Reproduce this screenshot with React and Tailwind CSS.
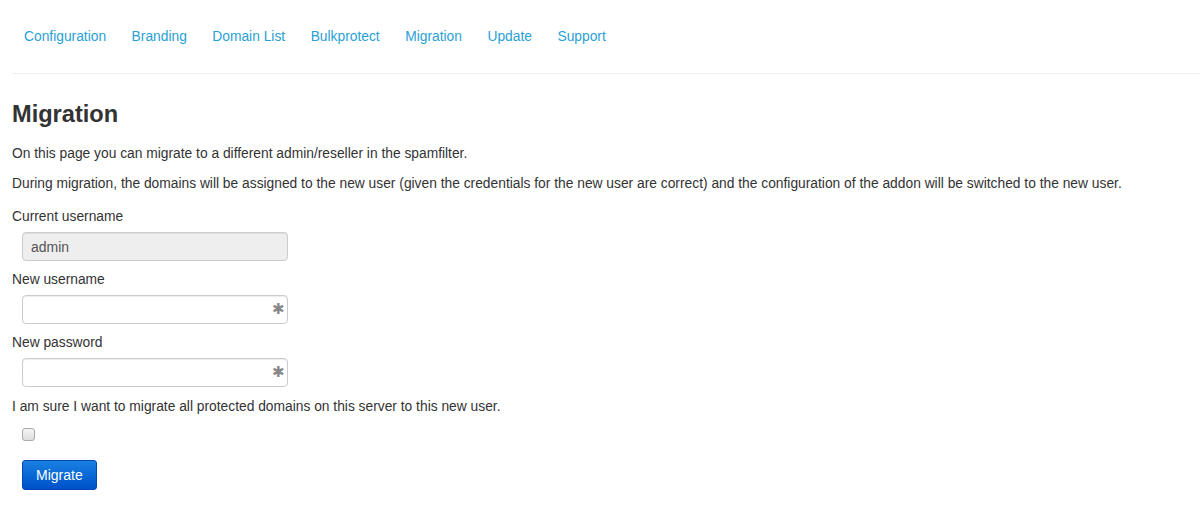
import { useState } from "react";

const tabs = [
  "Configuration",
  "Branding",
  "Domain List",
  "Bulkprotect",
  "Migration",
  "Update",
  "Support",
];

function Field({ label, value, disabled, type = "text", required }) {
  return (
    <div>
      <label className="block leading-5">{label}</label>
      <div className="relative ml-[10px] mt-[5px] w-[266px]">
        <input
          type={type}
          defaultValue={value}
          disabled={disabled}
          className={
            "block h-[29px] w-full rounded-[4px] border border-[#ccc] px-2 text-[14px] text-[#555] outline-none shadow-[inset_0_1px_1px_rgba(0,0,0,0.075)] " +
            (disabled ? "bg-[#eee]" : "bg-white")
          }
        />
        {required && (
          <span className="absolute right-[3px] top-[6px] text-[15px] leading-4 text-[#888]">
            ✱
          </span>
        )}
      </div>
    </div>
  );
}

export default function App() {
  const [sure, setSure] = useState(false);

  return (
    <div className="min-h-[531px] bg-white font-['Liberation_Sans',Arial,sans-serif] text-[13.8px] leading-5 text-[#333]">
      <div className="pl-3 pt-[17px]">
        {/* Tabs */}
        <ul className="flex gap-[1.5px]">
          {tabs.map((t) => (
            <li key={t}>
              <a href="#" className="block px-3 py-2.5 text-[#2a9fd6]">
                {t}
              </a>
            </li>
          ))}
        </ul>

        <hr className="mt-[16px] border-t border-[#eee]" />

        <h3 className="mt-[27px] text-[23.6px] font-bold leading-[26px]">Migration</h3>

        <p className="mt-[17px]">
          On this page you can migrate to a different admin/reseller in the spamfilter.
        </p>
        <p className="mt-[10px]">
          During migration, the domains will be assigned to the new user (given the credentials for the new user are correct) and the configuration of the addon will be switched to the new user.
        </p>

        <div className="mt-[13px] flex flex-col gap-[9px]">
          <Field label="Current username" value="admin" disabled />
          <Field label="New username" required />
          <Field label="New password" type="password" required />
        </div>

        <p className="mt-[10px]">
          I am sure I want to migrate all protected domains on this server to this new user.
        </p>
        <div className="ml-[10px] mt-[11px] h-[13px]">
          <input
            type="checkbox"
            checked={sure}
            onChange={(e) => setSure(e.target.checked)}
            className="m-0 block h-[13px] w-[13px] appearance-none rounded-[3px] border border-[#aaa] bg-gradient-to-b from-[#f4f4f4] to-[#dedede] checked:bg-[#2a9fd6]"
          />
        </div>

        <button className="ml-[10px] mt-[19px] h-[30px] rounded-[3px] border border-[#0047b3] bg-gradient-to-b from-[#1a80e2] to-[#0050c8] px-[13px] text-[14px] text-white">
          Migrate
        </button>
      </div>
    </div>
  );
}
